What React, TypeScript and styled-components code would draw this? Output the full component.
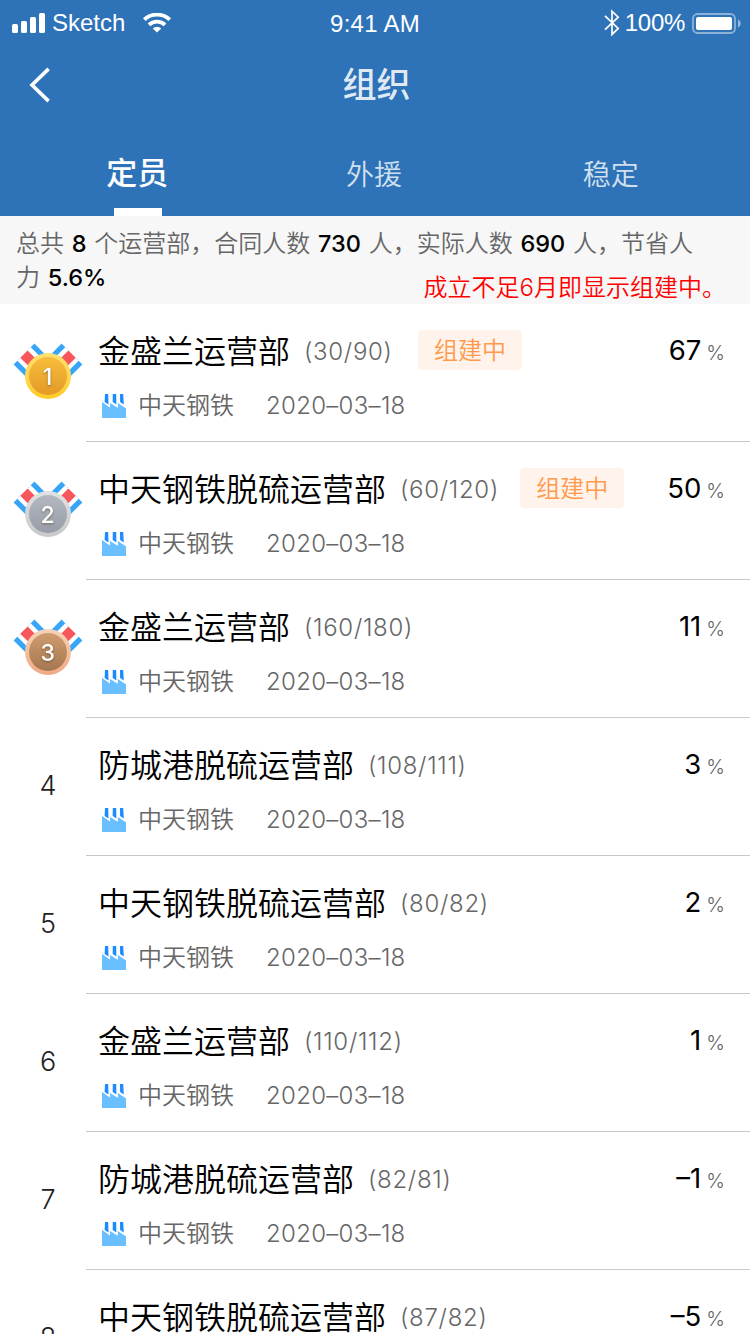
import React from 'react';
import styled, { createGlobalStyle } from 'styled-components';

const Global = createGlobalStyle`
  * { box-sizing: border-box; }
  html, body { margin: 0; padding: 0; background: #fff; }
  body { font-family: Inter, "Noto Sans CJK SC", sans-serif; color: #000; }
`;

const Screen = styled.div`
  width: 750px;
  height: 1334px;
  overflow: hidden;
  background: #fff;
`;

const Header = styled.header`
  height: 216px;
  background: #2e73b8;
  color: #fff;
  display: flex;
  flex-direction: column;
`;

const StatusBar = styled.div`
  height: 46px;
  display: grid;
  grid-template-columns: 1fr auto 1fr;
  align-items: center;
  padding: 0 9px 0 12px;
  font-family: "Liberation Sans", sans-serif;
  font-size: 24px;
  line-height: 44px;
`;

const StatusGroup = styled.div<{ $end?: boolean }>`
  display: flex;
  align-items: center;
  justify-content: ${p => (p.$end ? 'flex-end' : 'flex-start')};
`;

const Clock = styled.span`
  margin-right: 3px;
  padding-top: 1px;
  letter-spacing: 0.25px;
`;

const Carrier = styled.span`
  margin: 0 18px 0 7px;
`;

const Charge = styled.span`
  margin: 0 7px 0 5px;
  letter-spacing: -0.3px;
`;

const NavBar = styled.div`
  height: 80px;
  display: grid;
  grid-template-columns: 80px 1fr 80px;
  align-items: center;
  padding: 0 25px 2px 28px;
`;

const NavTitle = styled.h1`
  margin: 0;
  text-align: center;
  font-size: 34px;
  line-height: 44px;
  font-weight: 500;
  color: rgba(255, 255, 255, 0.87);
`;

const Tabs = styled.nav`
  flex: 1;
  display: flex;
  padding: 0 21px 0 19px;
`;

const Tab = styled.div<{ $active?: boolean }>`
  flex: 1;
  display: flex;
  flex-direction: column;
  align-items: center;
  justify-content: space-between;
  padding-top: ${p => (p.$active ? 23 : 25)}px;
  font-size: ${p => (p.$active ? 31 : 28)}px;
  font-weight: ${p => (p.$active ? 500 : 350)};
  line-height: 48px;
  color: ${p => (p.$active ? '#fff' : 'rgba(255,255,255,0.8)')};
`;

const TabMark = styled.div`
  width: 48px;
  height: 8px;
  margin-left: 1px;
  background: #fff;
`;

const Summary = styled.section`
  position: relative;
  height: 88px;
  background: #f7f7f7;
  padding: 11px 50px 0 16px;
  font-size: 24px;
  line-height: 34px;
  font-weight: 350;
  word-spacing: 1px;
  color: #666;
  b { color: #000; font-weight: 550; font-size: 23.5px; }
`;

const Notice = styled.div`
  position: absolute;
  right: 24px;
  top: 55px;
  color: #f00;
  font-weight: 350;
  white-space: nowrap;
`;

const Row = styled.article`
  height: 138px;
  display: flex;
`;

const Rank = styled.div`
  width: 86px;
  padding: 36px 0 0 10px;
  display: flex;
  justify-content: center;
`;

const RankNumber = styled.span`
  padding-top: 15px;
  font-size: 27px;
  line-height: 34px;
  font-weight: 300;
  color: #222;
`;

const Body = styled.div`
  flex: 1;
  padding: 22px 25px 0 12px;
  border-bottom: 1px solid #c8c8c8;
`;

const TopLine = styled.div`
  height: 50px;
  display: flex;
  align-items: center;
  white-space: nowrap;
`;

const Name = styled.span`
  padding-top: 2px;
  font-size: 32px;
  line-height: 50px;
  font-weight: 350;
`;

const Count = styled.span`
  margin-left: 14px;
  font-size: 24px;
  font-weight: 300;
  letter-spacing: 0.7px;
  color: #666;
`;

const Tag = styled.span<{ $gap: number }>`
  width: 104px;
  height: 40px;
  margin: 0 0 2px ${p => p.$gap}px;
  border-radius: 4px;
  background: #fff3eb;
  color: #ff9a4c;
  font-size: 24px;
  line-height: 41px;
  font-weight: 350;
  text-align: center;
`;

const Percent = styled.div`
  margin-left: auto;
  padding-bottom: 2px;
  display: flex;
  align-items: baseline;
  gap: 5px;
  font-size: 27.5px;
  font-weight: 370;
`;

const Unit = styled.span`
  font-size: 20px;
  font-weight: 300;
  color: #666;
`;

const MetaLine = styled.div`
  display: flex;
  align-items: center;
  height: 34px;
  margin-top: 12px;
  padding-left: 4px;
  font-size: 24px;
  font-weight: 350;
  color: #666;
`;

const Company = styled.span`
  margin: 0 32px 0 12px;
  padding-top: 2px;
  line-height: 34px;
`;

const Founded = styled.span`
  font-weight: 300;
  letter-spacing: 0.3px;
`;

const FactorySvg = styled.svg`
  margin-top: 2px;
`;

const Factory = () => (
  <FactorySvg width="24" height="24" viewBox="0 0 24 24">
    <path d="M3 0h3.2l.3 10.5L2.6 8zM10.8 0h3.4l.2 10.5-3.7-2.5zM18 0h3.2l.6 10.5-3.7-2.5z" fill="#1b8cff" />
    <path d="M0 7.8L8 13.4V8.7l7.7 5V8.7l8.3 5.5V24H0z" fill="#69bfff" />
    <path d="M0 7.3L7.6 12.6V8l7.7 4.8V8l8.7 5.6" fill="none" stroke="#fff" strokeWidth=".8" />
  </FactorySvg>
);

const medals = [
  { rim: ['#ffe070', '#ffcb2b'], face: ['#f8bd3c', '#e39a26'] },
  { rim: ['#e2e2e2', '#c8c8c8'], face: ['#b4b8c0', '#989ca8'] },
  { rim: ['#f8d3b8', '#efa884'], face: ['#cf9c6e', '#a5774f'] },
];

const Ribbon = () => (
  <g transform="translate(24.4 0.6) rotate(45)">
    <rect width="27" height="29.4" fill="#fff" />
    <rect width="27" height="5.2" fill="#38a6f8" />
    <rect y="9.6" width="27" height="10.4" fill="#f7575c" />
    <rect y="24.2" width="27" height="5.2" fill="#38a6f8" />
    <path d="M0 5v5M0 19.4v5" stroke="#ccd3e6" strokeWidth=".6" />
  </g>
);

const MedalSvg = styled.svg`
  display: block;
  flex: none;
`;

const MedalText = styled.text`
  font-family: Inter, sans-serif;
  font-size: 23px;
  font-weight: 450;
  fill: #fff;
  text-anchor: middle;
  filter: drop-shadow(0 1px 1px rgba(70, 45, 20, 0.5));
`;

const Medal = ({ rank }: { rank: number }) => {
  const { rim, face } = medals[rank - 1];
  return (
    <MedalSvg width="76" height="60" viewBox="0 -3 76 60">
      <defs>
        <linearGradient id={`rim${rank}`} x2="0" y2="1">
          <stop stopColor={rim[0]} /><stop offset="1" stopColor={rim[1]} />
        </linearGradient>
        <linearGradient id={`face${rank}`} x2="0" y2="1">
          <stop stopColor={face[0]} /><stop offset="1" stopColor={face[1]} />
        </linearGradient>
      </defs>
      <Ribbon />
      <g transform="translate(76 0) scale(-1 1)"><Ribbon /></g>
      <circle cx="38" cy="33" r="23" fill={`url(#rim${rank})`} />
      <circle cx="38" cy="33" r="19" fill={`url(#face${rank})`} />
      <MedalText x="37.6" y="41.5">{rank}</MedalText>
    </MedalSvg>
  );
};

type Item = { name: string; count: string; value: string; tagGap?: number };

const items: Item[] = [
  { name: '金盛兰运营部', count: '(30/90)', value: '67', tagGap: 25.4 },
  { name: '中天钢铁脱硫运营部', count: '(60/120)', value: '50', tagGap: 21.4 },
  { name: '金盛兰运营部', count: '(160/180)', value: '11' },
  { name: '防城港脱硫运营部', count: '(108/111)', value: '3' },
  { name: '中天钢铁脱硫运营部', count: '(80/82)', value: '2' },
  { name: '金盛兰运营部', count: '(110/112)', value: '1' },
  { name: '防城港脱硫运营部', count: '(82/81)', value: '–1' },
  { name: '中天钢铁脱硫运营部', count: '(87/82)', value: '–5' },
];

const SignalIcon = () => (
  <svg width="33" height="20" viewBox="0 0 33 20" fill="#fff">
    <rect y="11" width="6" height="9" rx="1.6" />
    <rect x="9" y="8" width="6" height="12" rx="1.6" />
    <rect x="18" y="4" width="6" height="16" rx="1.6" />
    <rect x="27" width="6" height="20" rx="1.6" />
  </svg>
);

const WifiIcon = () => (
  <svg width="28" height="20" viewBox="0 0 28 20">
    <g fill="none" stroke="#fff" strokeWidth="3.8">
      <path d="M1.3 6.6a18.6 18.6 0 0 1 25.4 0" />
      <path d="M6 11.8a11.6 11.6 0 0 1 16 0" />
    </g>
    <path d="M14 19.6l-4.2-4.2a6 6 0 0 1 8.4 0z" fill="#fff" />
  </svg>
);

const BluetoothIcon = () => (
  <svg width="16" height="28" viewBox="0 0 16 28" fill="none" stroke="#fff" strokeWidth="1.7">
    <path d="M1 6.8L14.2 19.4L8 25.4V2.2L14.2 8.2L1 20.6" />
  </svg>
);

const BatteryIcon = () => (
  <svg width="49" height="21" viewBox="0 0 49 21">
    <rect x="1" y="1" width="42" height="19" rx="4.5" fill="none" stroke="#fff" strokeOpacity=".45" strokeWidth="1.8" />
    <rect x="4" y="4" width="36" height="13" rx="2" fill="#fff" />
    <path d="M46 6.5c3.6 1.8 3.6 6.2 0 8z" fill="#fff" fillOpacity=".5" />
  </svg>
);

const BackIcon = () => (
  <svg width="24" height="36" viewBox="0 0 24 36" fill="none" stroke="#fff" strokeWidth="3.6">
    <path d="M20.6 1.9L4 18L20.6 34.1" />
  </svg>
);

export default function App() {
  return (
    <Screen>
      <Global />
      <Header>
        <StatusBar>
          <StatusGroup><SignalIcon /><Carrier>Sketch</Carrier><WifiIcon /></StatusGroup>
          <Clock>9:41 AM</Clock>
          <StatusGroup $end><BluetoothIcon /><Charge>100%</Charge><BatteryIcon /></StatusGroup>
        </StatusBar>
        <NavBar>
          <BackIcon />
          <NavTitle>组织</NavTitle>
        </NavBar>
        <Tabs>
          <Tab $active>定员<TabMark /></Tab>
          <Tab>外援</Tab>
          <Tab>稳定</Tab>
        </Tabs>
      </Header>
      <Summary>
        总共 <b>8</b> 个运营部，合同人数 <b>730</b> 人，实际人数 <b>690</b> 人，节省人力 <b>5.6%</b>
        <Notice>成立不足6月即显示组建中。</Notice>
      </Summary>
      {items.map((it, i) => (
        <Row key={i}>
          <Rank>{i < 3 ? <Medal rank={i + 1} /> : <RankNumber>{i + 1}</RankNumber>}</Rank>
          <Body>
            <TopLine>
              <Name>{it.name}</Name>
              <Count>{it.count}</Count>
              {it.tagGap && <Tag $gap={it.tagGap}>组建中</Tag>}
              <Percent>{it.value}<Unit>%</Unit></Percent>
            </TopLine>
            <MetaLine>
              <Factory />
              <Company>中天钢铁</Company>
              <Founded>2020–03–18</Founded>
            </MetaLine>
          </Body>
        </Row>
      ))}
    </Screen>
  );
}
